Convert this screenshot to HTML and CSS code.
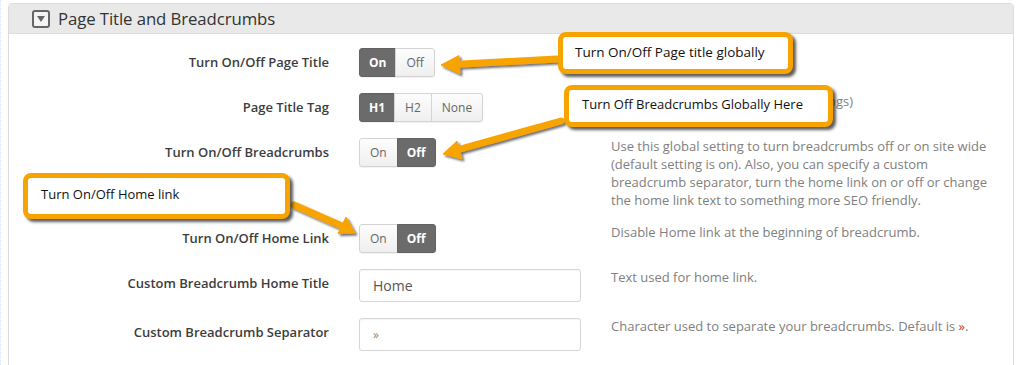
FILE: index.html
```html
<!DOCTYPE html>
<html>
<head>
<meta charset="utf-8">
<link rel="stylesheet" href="styles.css">
</head>
<body>
<div class="page">
  <div class="panel">
    <div class="panel-head">
      <span class="caret-box"><span class="caret"></span></span>
      <h3 class="panel-title">Page Title and Breadcrumbs</h3>
    </div>
    <div class="panel-body">
      <div class="row">
        <div class="label">Turn On/Off Page Title</div>
        <div class="control"><div class="btn-group"><span class="btn active">On</span><span class="btn">Off</span></div></div>
        <div class="desc"></div>
      </div>
      <div class="row">
        <div class="label">Page Title Tag</div>
        <div class="control"><div class="btn-group"><span class="btn active">H1</span><span class="btn">H2</span><span class="btn">None</span></div></div>
        <div class="desc">Choose a page title tag (default settings)</div>
      </div>
      <div class="row">
        <div class="label">Turn On/Off Breadcrumbs</div>
        <div class="control"><div class="btn-group"><span class="btn">On</span><span class="btn active">Off</span></div></div>
        <div class="desc">Use this global setting to turn breadcrumbs off or on site wide (default setting is on). Also, you can specify a custom breadcrumb separator, turn the home link on or off or change the home link text to something more SEO friendly.</div>
      </div>
      <div class="row">
        <div class="label">Turn On/Off Home Link</div>
        <div class="control"><div class="btn-group"><span class="btn">On</span><span class="btn active">Off</span></div></div>
        <div class="desc">Disable Home link at the beginning of breadcrumb.</div>
      </div>
      <div class="row">
        <div class="label">Custom Breadcrumb Home Title</div>
        <div class="control"><div class="input">Home</div></div>
        <div class="desc">Text used for home link.</div>
      </div>
      <div class="row">
        <div class="label">Custom Breadcrumb Separator</div>
        <div class="control"><div class="input small">»</div></div>
        <div class="desc">Character used to separate your breadcrumbs. Default is <span class="accent">»</span>.</div>
      </div>
    </div>
  </div>

  <svg class="arrows" width="1019" height="365" viewBox="0 0 1019 365">
    <defs>
      <filter id="sh" x="-20%" y="-50%" width="140%" height="200%">
        <feDropShadow dx="2" dy="2" stdDeviation="1.2" flood-color="#333" flood-opacity="0.7"/>
      </filter>
    </defs>
    <g fill="#f7a400" stroke="#f7a400" filter="url(#sh)">
      <line x1="556" y1="59" x2="452" y2="64.5" stroke-width="7" stroke-linecap="round"/>
      <polygon points="440,65 458,55.5 459,74" stroke-width="1" stroke-linejoin="round"/>
      <line x1="560" y1="121" x2="454" y2="150.5" stroke-width="7" stroke-linecap="round"/>
      <polygon points="442,154 456,141 461,159" stroke-width="1" stroke-linejoin="round"/>
      <line x1="293" y1="205" x2="343" y2="227" stroke-width="7" stroke-linecap="round"/>
      <polygon points="354,233 337,233.5 345,217" stroke-width="1" stroke-linejoin="round"/>
    </g>
  </svg>

  <div class="callout c1">Turn On/Off Page title globally</div>
  <div class="callout c2">Turn Off Breadcrumbs Globally Here</div>
  <div class="callout c3">Turn On/Off Home link</div>
</div>
</body>
</html>
```
FILE: styles.css
```css
* { box-sizing: border-box; }
html, body { margin: 0; padding: 0; background: #fff; }
body { font-family: "Open Sans", "Noto Sans", sans-serif; color: #333; }

.page {
  position: relative;
  width: 1019px;
  height: 365px;
  overflow: hidden;
  padding: 3px 5px 0 7px;
  border-left: 1px dotted #d6e4f2;
}

.panel {
  border: 1px solid #dcdcdc;
  border-radius: 4px 4px 0 0;
  height: 380px;
  background: #fff;
}

.panel-head {
  height: 30px;
  display: flex;
  align-items: center;
  gap: 8px;
  padding-left: 23px;
  border-bottom: 1px solid #dcdcdc;
  background-color: #efefef;
  background-image: radial-gradient(#e2e2e2 0.6px, transparent 0.8px);
  background-size: 2px 2px;
}

.caret-box {
  width: 18px;
  height: 18px;
  border: 2px solid #666;
  border-radius: 3px;
  display: flex;
  align-items: center;
  justify-content: center;
  background: #f4f4f4;
}
.caret {
  width: 0; height: 0;
  border-left: 4.5px solid transparent;
  border-right: 4.5px solid transparent;
  border-top: 6px solid #666;
  margin-top: 1px;
}

.panel-title {
  margin: 0;
  font-weight: 400;
  font-size: 16.8px;
  color: #333;
  letter-spacing: -0.1px;
}

.panel-body {
  padding: 14px 0 0 0;
  display: flex;
  flex-direction: column;
  gap: 16px;
}

.row {
  display: grid;
  grid-template-columns: 320px 222px 392px;
  column-gap: 30px;
  align-items: start;
}

.label {
  text-align: right;
  font-size: 13px;
  font-weight: 600;
  color: #3d3d3d;
  line-height: 29px;
}

.control { display: flex; }

.btn-group {
  display: flex;
  height: 29px;
  border-radius: 3px;
  box-shadow: 0 1px 1px rgba(0,0,0,0.06);
}
.btn {
  display: flex;
  align-items: center;
  justify-content: center;
  padding: 0 10px;
  font-size: 12px;
  color: #666;
  background: linear-gradient(#fdfdfd, #efefef);
  border: 1px solid #d4d4d4;
  margin-left: -1px;
}
.btn:first-child { border-radius: 3px 0 0 3px; margin-left: 0; }
.btn:last-child { border-radius: 0 3px 3px 0; }
.btn.active {
  background: #6b6b6b;
  border-color: #626262;
  color: #fff;
  font-weight: 700;
  padding: 0 9px;
}

.input {
  width: 222px;
  height: 33px;
  border: 1px solid #d6d6d6;
  border-radius: 3px;
  padding: 0 13px;
  display: flex;
  align-items: center;
  font-size: 14px;
  color: #555;
  box-shadow: inset 0 1px 1px rgba(0,0,0,0.04);
}
.input.small { font-size: 12px; color: #888; }

.desc {
  font-size: 13px;
  line-height: 18px;
  color: #808080;
  margin-top: -1px;
  margin-bottom: -1px;
}
.accent { color: #c0392b; }

.arrows {
  position: absolute;
  left: 0;
  top: 0;
  pointer-events: none;
}

.callout {
  position: absolute;
  background: #fff;
  border: 5px solid #f7a400;
  border-radius: 8px;
  box-shadow: 3px 3px 3px rgba(40,40,40,0.75);
  font-family: "Open Sans", "Noto Sans", sans-serif;
  font-size: 13px;
  color: #111;
  display: flex;
  align-items: center;
  padding-left: 12px;
}
.c1 { left: 557px; top: 32px; width: 235px; height: 42px; padding-bottom: 2px; font-size: 13.5px; }
.c2 { left: 563px; top: 85px; width: 269px; height: 42px; padding-left: 13px; padding-bottom: 4px; }
.c3 { left: 22px; top: 173px; width: 267px; height: 46px; padding-left: 13px; padding-bottom: 5px; }
```
